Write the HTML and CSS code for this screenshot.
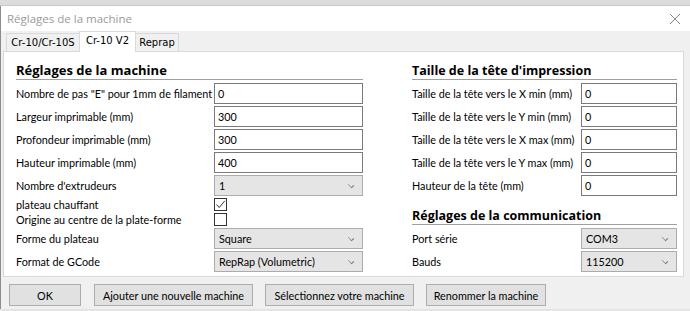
FILE: index.html
```html
<!DOCTYPE html>
<html lang="fr">
<head>
    <meta charset="UTF-8">
    <title>Réglages de la machine</title>
    <link rel="stylesheet" href="styles.css">
</head>
<body>
    <div class="desktop"></div>
    <div class="window">
        <div class="titlebar">
            <span class="title">Réglages de la machine</span>
            <svg class="close" width="12" height="12" viewBox="0 0 12 12">
                <path d="M1 1 L11 11 M11 1 L1 11" stroke="#8a8a8a" stroke-width="1" fill="none"/>
            </svg>
        </div>
        <div class="client">
            <div class="tabs">
                <div class="tab tab-cr10">Cr-10/Cr-10S</div>
                <div class="tab tab-v2 active">Cr-10 V2</div>
                <div class="tab tab-reprap">Reprap</div>
            </div>
            <div class="panel">
                <div class="col col-left">
                    <h2 class="section">Réglages de la machine</h2>
                    <div class="row"><label>Nombre de pas "E" pour 1mm de filament</label><div class="field">0</div></div>
                    <div class="row"><label>Largeur imprimable (mm)</label><div class="field">300</div></div>
                    <div class="row"><label>Profondeur imprimable (mm)</label><div class="field">300</div></div>
                    <div class="row"><label>Hauteur imprimable (mm)</label><div class="field">400</div></div>
                    <div class="row"><label>Nombre d'extrudeurs</label><div class="field select">1<span class="chev"></span></div></div>
                    <div class="row small"><label>plateau chauffant</label><div class="check checked">
                        <svg width="11" height="11" viewBox="0 0 11 11"><path d="M1.5 5.5 L4.2 8.5 L9.8 1.8" stroke="#333" stroke-width="1" fill="none"/></svg>
                    </div></div>
                    <div class="row small"><label>Origine au centre de la plate-forme</label><div class="check"></div></div>
                    <div class="row"><label>Forme du plateau</label><div class="field select">Square<span class="chev"></span></div></div>
                    <div class="row"><label>Format de GCode</label><div class="field select">RepRap (Volumetric)<span class="chev"></span></div></div>
                </div>
                <div class="col col-right">
                    <h2 class="section">Taille de la tête d'impression</h2>
                    <div class="row"><label>Taille de la tête vers le X min (mm)</label><div class="field">0</div></div>
                    <div class="row"><label>Taille de la tête vers le Y min (mm)</label><div class="field">0</div></div>
                    <div class="row"><label>Taille de la tête vers le X max (mm)</label><div class="field">0</div></div>
                    <div class="row"><label>Taille de la tête vers le Y max (mm)</label><div class="field">0</div></div>
                    <div class="row"><label>Hauteur de la tête (mm)</label><div class="field">0</div></div>
                    <h2 class="section second">Réglages de la communication</h2>
                    <div class="row"><label>Port série</label><div class="field select">COM3<span class="chev"></span></div></div>
                    <div class="row"><label>Bauds</label><div class="field select">115200<span class="chev"></span></div></div>
                </div>
            </div>
            <div class="buttons">
                <button type="button" class="btn btn-ok">OK</button>
                <button type="button" class="btn btn-add">Ajouter une nouvelle machine</button>
                <button type="button" class="btn btn-select">Sélectionnez votre machine</button>
                <button type="button" class="btn btn-rename">Renommer la machine</button>
            </div>
        </div>
    </div>
</body>
</html>
```

FILE: styles.css
```css
* {
    margin: 0;
    padding: 0;
    box-sizing: border-box;
}

body {
    width: 690px;
    height: 311px;
    overflow: hidden;
    background: #e4e4e4;
    font-family: Lato, 'Open Sans', sans-serif;
    font-size: 10.8px;
    color: #000;
}

.desktop {
    height: 6px;
    background: #dcdcdc;
    border-bottom: 1px solid #c8c8c8;
}

.window {
    border-left: 1px solid #8c8c8c;
    background: #f0f0f0;
    height: 303px;
}

.titlebar {
    height: 25px;
    background: #fff;
    display: flex;
    align-items: center;
    justify-content: space-between;
    padding: 0 9px 0 6px;
}

.title {
    color: #9a9a9a;
    font-family: 'Open Sans', sans-serif;
    font-size: 11.5px;
}

.client {
    padding: 0 6px 0 2px;
}

.tabs {
    display: flex;
    height: 20px;
    align-items: flex-end;
    padding-left: 3px;
}

.tab {
    height: 18px;
    border: 1px solid #d9d9d9;
    border-bottom: none;
    background: #f0f0f0;
    font-family: 'DejaVu Sans', sans-serif;
    font-size: 10px;
    line-height: 17px;
    text-align: center;
}

.tab-cr10 {
    width: 74px;
}

.tab-v2 {
    width: 57px;
}

.tab-reprap {
    width: 44px;
}

.tab.active {
    height: 21px;
    margin-bottom: -1px;
    background: #fff;
    position: relative;
    z-index: 1;
}

.tab + .tab {
    margin-left: -1px;
}

.panel {
    height: 226px;
    background: #fff;
    border: 1px solid #d9d9d9;
    display: flex;
    padding: 10px 0 0 12px;
    gap: 49px;
}

.col-left {
    width: 347px;
}

.col-right {
    width: 265px;
}

.section {
    font-family: 'Open Sans', sans-serif;
    font-size: 13px;
    font-weight: bold;
    height: 18px;
    line-height: 17px;
    border-bottom: 1px solid #a0a0a0;
    margin-bottom: 2px;
}

.col-right .section {
    font-size: 12.5px;
}

.section.second {
    margin-top: 10px;
}

.row {
    display: flex;
    align-items: center;
    height: 23px;
}

.row.small {
    height: 15px;
}

.row label {
    flex: none;
    width: 198px;
    white-space: nowrap;
}

.col-right .row label {
    width: 169px;
}

.field {
    flex: 1;
    height: 21px;
    border: 1px solid #7a7a7a;
    background: #fff;
    padding-left: 3px;
    line-height: 19px;
}

.field.select {
    background: #e5e5e5;
    border-color: #acacac;
    position: relative;
    padding-left: 4px;
}

.chev {
    position: absolute;
    right: 8px;
    top: 6px;
    width: 6px;
    height: 6px;
    border-right: 1px solid #707070;
    border-bottom: 1px solid #707070;
    transform: rotate(45deg) scale(0.9, 0.6);
}

.check {
    width: 13px;
    height: 13px;
    border: 1px solid #333;
    background: #fff;
    display: flex;
    align-items: center;
    justify-content: center;
}

.buttons {
    display: flex;
    gap: 12px;
    padding: 7px 0 0 6px;
}

.btn {
    height: 22px;
    background: #e1e1e1;
    border: 1px solid #adadad;
    font-family: inherit;
    font-size: 10.8px;
    color: #000;
}

.btn-ok {
    width: 72px;
}

.btn-add {
    width: 159px;
    margin-left: 1px;
}

.btn-select {
    width: 149px;
}

.btn-rename {
    width: 120px;
}
```
